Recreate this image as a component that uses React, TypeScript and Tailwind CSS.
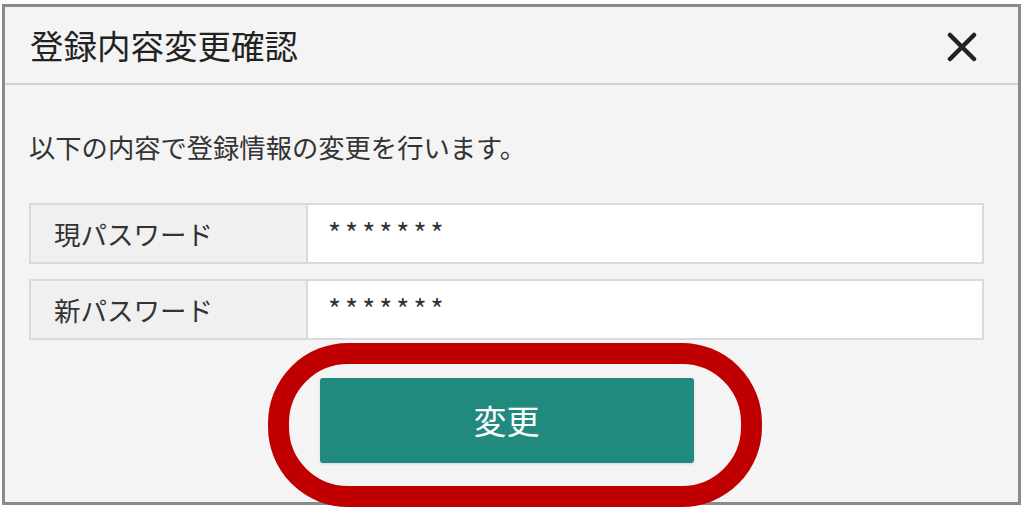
const jp = "font-['Meiryo','Noto_Sans_CJK_JP',sans-serif]"

function CloseIcon() {
  return (
    <svg width="30" height="30" viewBox="0 0 30 30" className="block">
      <path d="M3 3 L27 27 M27 3 L3 27" stroke="#222" strokeWidth="4.5" strokeLinecap="round" fill="none" />
    </svg>
  )
}

function Row({ label, value }: { label: string; value: string }) {
  return (
    <div className="flex h-[61px] border-2 border-[#dadada] bg-white">
      <div className="flex w-[277px] items-center border-r-2 border-[#dadada] bg-[#f0f0f0] pl-[23px] text-[26.5px] text-[#333]">
        {label}
      </div>
      <div className="flex-1 pl-[20px] pt-[6px] text-[28px] tracking-[4px] text-[#333]">{value}</div>
    </div>
  )
}

export default function App() {
  return (
    <div className={`relative h-[513px] w-[1031px] overflow-hidden bg-white ${jp}`}>
      <div className="ml-[2px] mt-[4px] flex h-[501px] w-[1019px] flex-col border-[3px] border-[#8a8a8a] bg-[#f4f4f4]">
        <div className="flex h-[78px] items-center justify-between border-b-2 border-[#d2d2d2] pl-[25px] pr-[41px]">
          <h1 className="text-[33.5px] text-[#222]">登録内容変更確認</h1>
          <button type="button" className="pt-[4px]">
            <CloseIcon />
          </button>
        </div>

        <div className="flex flex-col pl-[24px] pr-[34px]">
          <p className="mt-[44px] text-[26.3px] leading-[36px] text-[#333]">以下の内容で登録情報の変更を行います。</p>

          <div className="mt-[38px] flex flex-col gap-[15px]">
            <Row label="現パスワード" value="*******" />
            <Row label="新パスワード" value="*******" />
          </div>

          <div className="mt-[38px] flex justify-center">
            <button className="h-[85px] w-[374px] rounded-[3px] bg-[#218a7f] text-[33px] text-white shadow-sm">
              変更
            </button>
          </div>
        </div>
      </div>

      {/* red highlight */}
      <div className="pointer-events-none absolute left-[268px] top-[343px] h-[164px] w-[494px] rounded-[80px] border-[21px] border-[#c00000]" />
    </div>
  )
}
